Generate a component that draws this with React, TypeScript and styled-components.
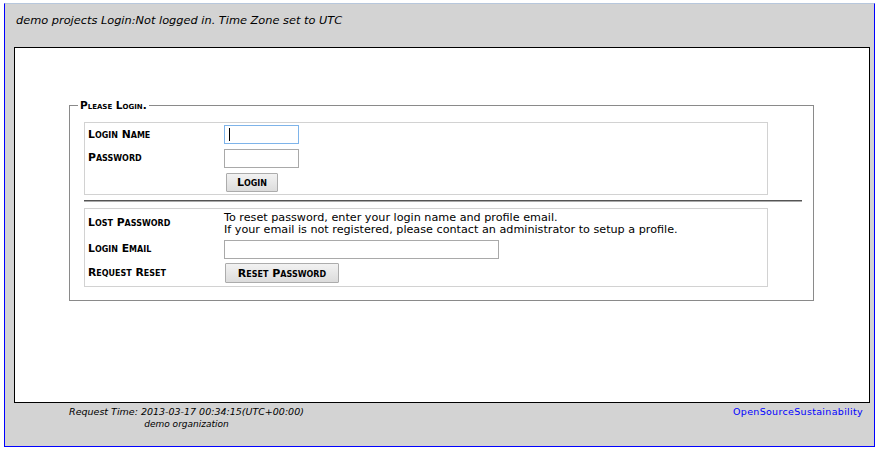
import React from "react";
import styled, { createGlobalStyle } from "styled-components";

const Global = createGlobalStyle`
  html, body { margin: 0; padding: 0; background: #fff; }
  body { font-family: "DejaVu Sans", Verdana, sans-serif; color: #000; }
  * { box-sizing: border-box; }
`;

const Page = styled.div`
  padding: 3px 2px 0 4px;
`;

const Frame = styled.div`
  width: 871px;
  height: 444px;
  background: #d3d3d3;
  border: 1px solid #0000ff;
  border-top-color: #b7c7dc;
  display: flex;
  flex-direction: column;
`;

const Header = styled.div`
  height: 43px;
  padding: 10px 0 0 11px;
  font-size: 11.35px;
  line-height: 13px;
  font-style: italic;
`;

const Content = styled.div`
  margin: 0 4px 0 9px;
  height: 356px;
  flex: none;
  background: #fff;
  border: 1px solid #000;
  padding: 51px 0 0 54px;
`;

const Fieldset = styled.fieldset`
  width: 745px;
  height: 202px;
  margin: 0;
  border: 1px solid #8a8a8a;
  padding: 11px 11px 0 14px;
`;

const Legend = styled.legend`
  font-size: 10.5px;
  font-weight: bold;
  font-variant: small-caps;
  padding: 0 2px;
  margin-left: -6px;
  line-height: 12px;
`;

const Table = styled.div<{ $h: number }>`
  width: 684px;
  height: ${(p) => p.$h}px;
  border: 1px solid #d2d2d2;
  display: grid;
  grid-template-columns: 136px 1fr;
  align-content: start;
  padding: 0 0 0 3px;
`;

const Label = styled.div<{ $h: number }>`
  height: ${(p) => p.$h}px;
  display: flex;
  align-items: center;
  padding-bottom: 1px;
  font-size: 10.8px;
  font-weight: bold;
  font-variant: small-caps;
`;

const Cell = styled.div<{ $h: number }>`
  height: ${(p) => p.$h}px;
  display: flex;
  align-items: center;
`;

const InputWrap = styled.div<{ $focus?: boolean }>`
  position: relative;
  display: inline-block;
  ${(p) =>
    p.$focus
      ? `&::after { content: ""; position: absolute; left: 5px; top: 3px; width: 1px; height: 13px; background: #000; }`
      : ""}
`;

const Input = styled.input<{ $w: number; $focus?: boolean }>`
  display: block;
  width: ${(p) => p.$w}px;
  height: 19px;
  border: 1px solid ${(p) => (p.$focus ? "#7eb4ea" : "#a9a9a9")};
  background: #fff;
  padding: 0 3px;
  margin: 0;
  outline: none;
  caret-color: transparent;
  font-family: "DejaVu Sans", Verdana, sans-serif;
  font-size: 10px;
`;

const Button = styled.button<{ $w: number; $h: number; $ml: number }>`
  width: ${(p) => p.$w}px;
  height: ${(p) => p.$h}px;
  margin: 0 0 0 ${(p) => p.$ml}px;
  padding: 0;
  border: 1px solid #acacac;
  border-radius: 1px;
  background: linear-gradient(#f2f2f2, #dcdcdc);
  font-family: "DejaVu Sans", Verdana, sans-serif;
  font-size: 11px;
  font-weight: bold;
  font-variant: small-caps;
  color: #000;
`;

const Rule = styled.div`
  width: 718px;
  height: 2px;
  margin: 5px 0 6px 0;
  border-top: 1px solid #555;
  border-bottom: 1px solid #aaa;
`;

const Desc = styled.div`
  font-size: 11.2px;
  line-height: 12px;
  padding-top: 3px;
`;

const Footer = styled.div`
  display: flex;
  justify-content: space-between;
  padding: 2px 11px 0 9px;
`;

const FooterLeft = styled.div`
  width: 345px;
  text-align: center;
  font-style: italic;
  font-size: 9.5px;
  line-height: 13px;
`;

const Org = styled.div`
  font-size: 9px;
`;

const Link = styled.a`
  color: #0000ff;
  text-decoration: none;
  font-size: 9.5px;
  line-height: 13px;
  letter-spacing: 0.32px;
`;

export default function App() {
  return (
    <>
      <Global />
      <Page>
        <Frame>
          <Header>demo projects Login:Not logged in. Time Zone set to UTC</Header>
          <Content>
            <Fieldset>
              <Legend>Please Login.</Legend>
              <Table $h={73}>
                <Label $h={23}>Login Name</Label>
                <Cell $h={23}>
                  <InputWrap $focus>
                    <Input $w={75} $focus />
                  </InputWrap>
                </Cell>
                <Label $h={24}>Password</Label>
                <Cell $h={24}>
                  <Input $w={75} type="password" />
                </Cell>
                <Label $h={24}></Label>
                <Cell $h={24}>
                  <Button $w={52} $h={19} $ml={2}>Login</Button>
                </Cell>
              </Table>
              <Rule />
              <Table $h={79}>
                <Label $h={28}>Lost Password</Label>
                <Desc>
                  To reset password, enter your login name and profile email.
                  <br />
                  If your email is not registered, please contact an administrator to setup a profile.
                </Desc>
                <Label $h={24}>Login Email</Label>
                <Cell $h={24}>
                  <Input $w={275} />
                </Cell>
                <Label $h={24}>Request Reset</Label>
                <Cell $h={24}>
                  <Button $w={114} $h={20} $ml={1}>Reset Password</Button>
                </Cell>
              </Table>
            </Fieldset>
          </Content>
          <Footer>
            <FooterLeft>
              Request Time: 2013-03-17 00:34:15(UTC+00:00)
              <Org>demo organization</Org>
            </FooterLeft>
            <Link href="#">OpenSourceSustainability</Link>
          </Footer>
        </Frame>
      </Page>
    </>
  );
}
